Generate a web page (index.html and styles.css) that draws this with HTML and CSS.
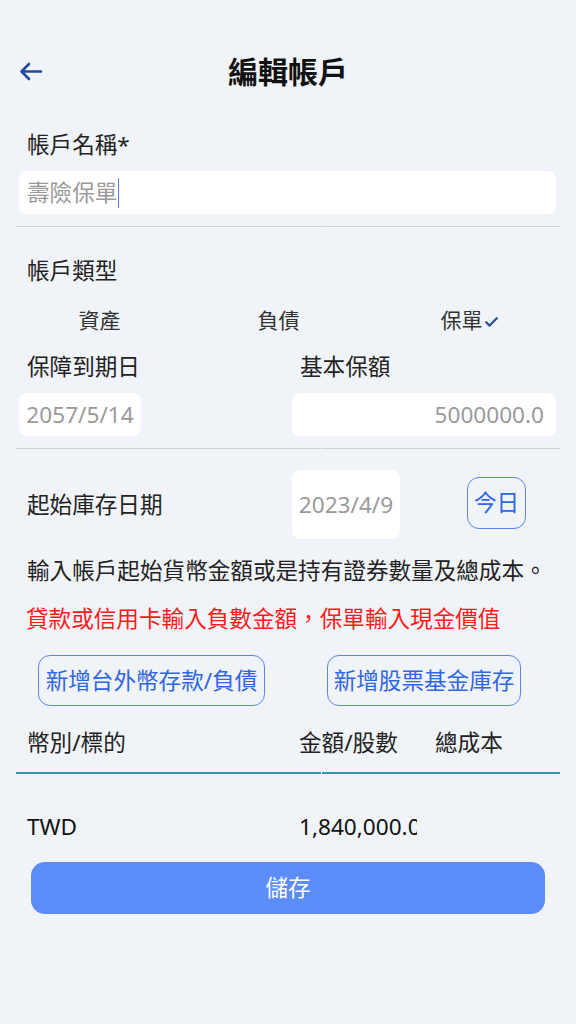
FILE: index.html
```html
<!DOCTYPE html>
<html lang="zh-Hant">
<head>
<meta charset="utf-8">
<title>編輯帳戶</title>
<link rel="stylesheet" href="styles.css">
</head>
<body>
<div class="page">
  <header class="header">
    <div class="back">
      <svg width="24" height="20" viewBox="0 0 24 20" aria-hidden="true">
        <path d="M22 9.5 H2.5 M10 2 L2.5 9.5 L10 17" fill="none" stroke="#1f4a9a" stroke-width="2.6" stroke-linecap="round" stroke-linejoin="round"/>
      </svg>
    </div>
    <h1 class="title">編輯帳戶</h1>
    <div></div>
  </header>

  <div class="label label-first">帳戶名稱*</div>
  <div class="input name-input"><span class="ph">壽險保單</span><span class="caret"></span></div>
  <div class="divider divider-a"><span></span><span></span></div>

  <div class="label label-type">帳戶類型</div>
  <div class="options">
    <div class="opt">資產</div>
    <div class="opt">負債</div>
    <div class="opt">保單<svg class="check" width="13" height="10" viewBox="0 0 13 10" aria-hidden="true"><path d="M1.2 5.2 L4.6 8.6 L11.8 1.2" fill="none" stroke="#2c4d8c" stroke-width="2.2" stroke-linecap="round" stroke-linejoin="round"/></svg></div>
  </div>

  <div class="two-col labels-row">
    <div class="label">保障到期日</div>
    <div class="label">基本保額</div>
  </div>
  <div class="two-col inputs-row">
    <div class="input date-input"><span class="ph">2057/5/14</span></div>
    <div class="input amount-input"><span class="ph">5000000.0</span></div>
  </div>
  <div class="divider divider-b"><span></span><span></span></div>

  <div class="start-row">
    <div class="label">起始庫存日期</div>
    <div class="start-date"><span class="ph">2023/4/9</span></div>
    <button class="outline today">今日</button>
  </div>

  <p class="note">輸入帳戶起始貨幣金額或是持有證券數量及總成本。</p>
  <p class="warn">貸款或信用卡輸入負數金額，保單輸入現金價值</p>

  <div class="add-row">
    <button class="outline add add-cash">新增台外幣存款/負債</button>
    <button class="outline add add-stock">新增股票基金庫存</button>
  </div>

  <div class="table-head">
    <div class="c1">幣別/標的</div>
    <div class="c2">金額/股數</div>
    <div class="c3">總成本</div>
  </div>
  <div class="divider table-line"><span></span><span></span></div>

  <div class="table-row">
    <div class="c1">TWD</div>
    <div class="c2 clip">1,840,000.0</div>
    <div class="c3"></div>
  </div>

  <button class="save">儲存</button>
</div>
</body>
</html>
```

FILE: styles.css
```css
* { box-sizing: border-box; }
html, body { margin: 0; padding: 0; }
body {
  background: #f0f3f7;
  font-family: "Noto Sans", "Noto Sans CJK TC", sans-serif;
  font-size: 22.6px;
  color: #222;
  width: 576px;
  min-height: 1024px;
}
.page { padding: 0 16px; }

.header {
  display: grid;
  grid-template-columns: 1fr auto 1fr;
  align-items: center;
  height: 36px;
  margin-top: 54px;
}
.back { display: flex; align-items: center; padding-left: 3px; }
.title {
  margin: 0;
  font-size: 30px;
  font-weight: 700;
  line-height: 36px;
  color: #111;
}

.label {
  line-height: 30px;
  height: 30px;
  padding-left: 11px;
  color: #222;
  white-space: nowrap;
}
.label-first { margin-top: 40px; }

.input {
  background: #fff;
  border-radius: 8px;
  height: 43px;
  display: flex;
  align-items: center;
  padding: 0 8px;
}
.ph { color: #9a9a9a; line-height: 30px; }
.name-input { margin: 11px 4px 0 3px; }
.caret {
  display: inline-block;
  width: 1px;
  height: 30px;
  background: #5a7fd8;
  margin-left: 1px;
}

.divider {
  display: grid;
  grid-template-columns: 305px 1fr;
  column-gap: 1px;
  height: 1px;
}
.divider span { background: #cdd0d4; }
.divider-a { margin-top: 12px; }
.divider-b { margin-top: 12px; }

.label-type { margin-top: 29px; }

.options {
  display: grid;
  grid-template-columns: 181px 181px 1fr;
  margin-top: 19px;
  height: 30px;
  line-height: 30px;
  color: #333;
  font-size: 21px;
}
.opt { text-align: center; }
.opt:nth-child(1) { padding-right: 14px; }
.opt:nth-child(2) { padding-right: 18px; }
.opt:nth-child(3) { padding-left: 0; }
.check { margin-left: 2px; vertical-align: 1px; }

.two-col {
  display: grid;
  grid-template-columns: 276px 1fr;
}
.labels-row { margin-top: 17px; }
.labels-row .label:nth-child(2) { padding-left: 8px; }
.inputs-row { margin-top: 11px; }
.date-input { margin-left: 3px; width: 122px; justify-content: center; padding: 0; }
.amount-input { justify-content: flex-end; padding-right: 12px; margin-right: 4px; }

.start-row {
  display: grid;
  grid-template-columns: 276px 108px 1fr;
  align-items: center;
  margin-top: 21px;
  height: 69px;
}
.start-date {
  background: #fff;
  border-radius: 8px;
  height: 69px;
  display: flex;
  align-items: center;
  justify-content: center;
}
.outline {
  font-family: inherit;
  font-size: 22.6px;
  color: #2f66e3;
  background: transparent;
  border: 1.5px solid #5a86ee;
  border-radius: 12px;
  padding: 0;
  line-height: 30px;
  cursor: pointer;
}
.today {
  width: 59px;
  height: 52px;
  margin-left: 67px;
  margin-top: -4px;
}

.note {
  margin: 17px 0 0;
  padding-left: 11px;
  line-height: 30px;
  height: 30px;
  white-space: nowrap;
  color: #222;
}
.warn {
  margin: 18px 0 0;
  padding-left: 10px;
  line-height: 30px;
  height: 30px;
  white-space: nowrap;
  color: #ff1a1a;
}

.add-row {
  display: flex;
  margin-top: 21px;
  height: 51px;
}
.add { height: 51px; white-space: nowrap; }
.add-cash { width: 227px; margin-left: 22px; }
.add-stock { width: 194px; margin-left: 62px; }

.table-head, .table-row {
  display: grid;
  grid-template-columns: 283px 136px 1fr;
  line-height: 30px;
  height: 30px;
  white-space: nowrap;
}
.table-head { margin-top: 22px; color: #222; }
.c1 { padding-left: 11px; }
.table-row { margin-top: 38px; color: #111; }
.clip { overflow: hidden; width: 118px; }

.table-line { margin-top: 14px; height: 2px; }
.table-line span { background: #3592b8; }

.save {
  display: block;
  width: 514px;
  height: 52px;
  margin: 20px 0 0 15px;
  border: none;
  border-radius: 14px;
  background: #5b8cf8;
  color: #fff;
  font-family: inherit;
  font-size: 22.6px;
  line-height: 30px;
  cursor: pointer;
}
```
